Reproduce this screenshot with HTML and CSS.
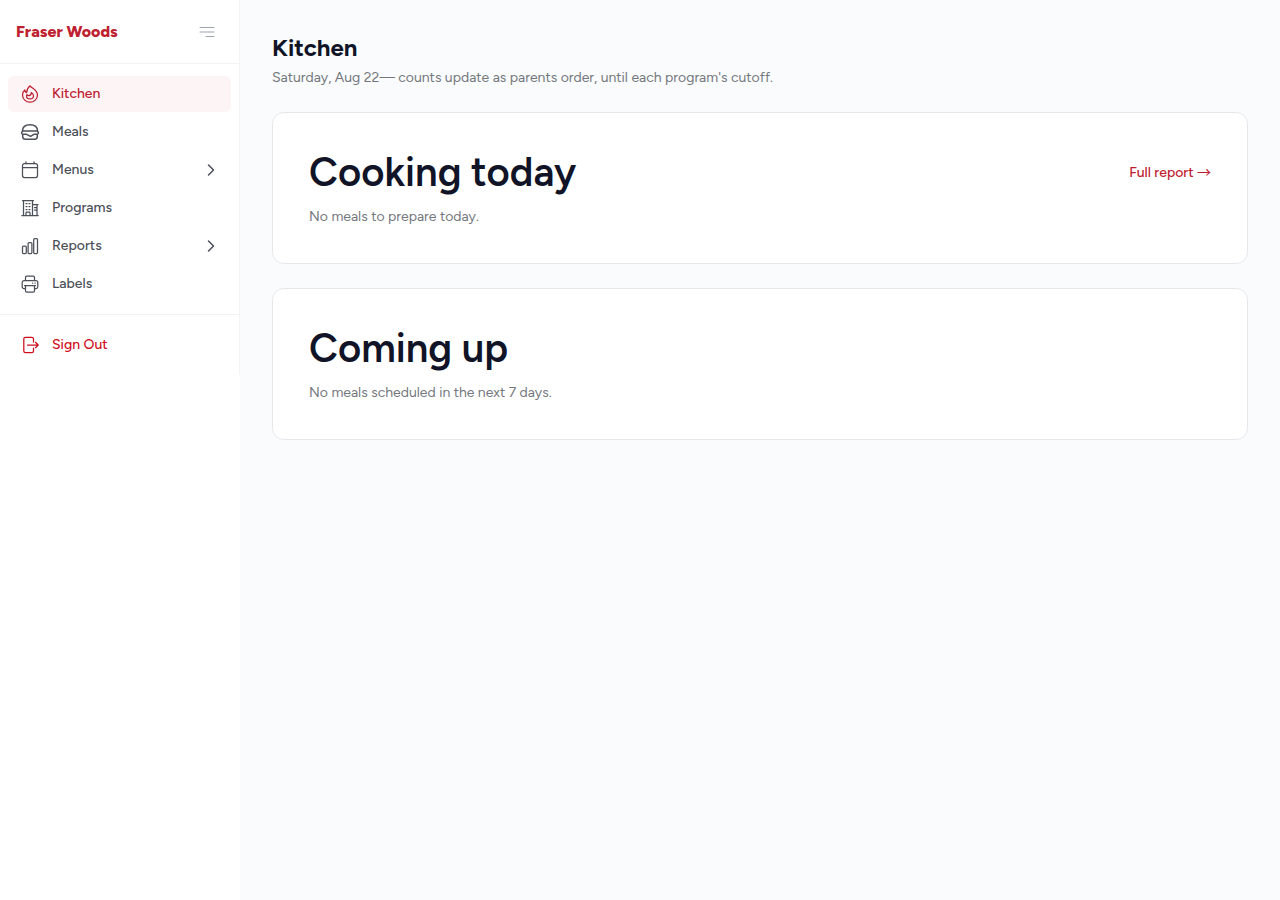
FILE: index.html
```html
<!DOCTYPE html>
<html lang="en">
<head>
    <meta charset="UTF-8">
    <meta name="viewport" content="width=device-width, initial-scale=1.0">
    <title>Kitchen - Fraser Woods</title>
    <link rel="stylesheet" href="styles.css">
</head>
<body>
    <aside class="sidebar">
        <div class="sidebar-inner">
            <div class="brand">
                <a class="brand-name" href="#">Fraser Woods</a>
                <button class="menu-toggle" type="button" aria-label="Toggle sidebar">
                    <svg viewBox="0 0 16 16"><path d="M1 3.500h14M1 8h14M7 12.500h8"/></svg>
                </button>
            </div>

            <nav class="nav">
                <a class="nav-item active" href="#">
                    <svg class="icon" viewBox="0 0 20 20"><path d="M10 1.800c.8 2.200 7.500 3.700 7.500 9.200a7.400 7.400 0 0 1-7.500 7.200A7.400 7.400 0 0 1 2.500 11c0-2 .7-3.700 2.300-5 .3 1.300.8 2.200 1.800 2.800C6.900 6 7.800 3.600 10 1.800z"/><path d="M11.300 8.500c1.500 1 2.200 2 2.200 3.200 0 1.900-1.500 3.200-3.500 3.200s-3.500-1.200-3.500-2.900c0-.6.200-1 .6-1.400.5.700 1 1 1.800 1 1.300 0 2.400-1.200 2.400-3.100z"/></svg>
                    <span>Kitchen</span>
                </a>
                <a class="nav-item" href="#">
                    <svg class="icon burger" viewBox="0 0 20 20"><path d="M2.500 9C2.500 5 5.500 2.700 10 2.700S17.500 5 17.500 9z"/><path d="M2.500 9.500c-1.300.6-1.200 2.600.3 2.800h3.700l4 2 3.500-2h3.200c1.500-.2 1.600-2.200.3-2.800M2.700 12.500v2c0 1.700 1 2.700 2.500 2.700h9.600c1.500 0 2.500-1 2.500-2.700v-2"/></svg>
                    <span>Meals</span>
                </a>
                <a class="nav-item" href="#">
                    <svg class="icon" viewBox="0 0 20 20"><rect x="2.500" y="3.500" width="15" height="14" rx="2"/><path d="M2.500 7.500h15M6 1.800v1.700M14 1.800v1.700"/></svg>
                    <span>Menus</span>
                    <svg class="chevron" viewBox="0 0 16 16"><path d="M5.500 3L10.500 8l-5 5"/></svg>
                </a>
                <a class="nav-item" href="#">
                    <svg class="icon" viewBox="0 0 20 20"><path d="M1.800 17.500h16.500M3.500 17.500v-15M12.500 2.500v15M2.500 2.500h11M12.500 6.500h5.500M17 6.500v11M14.500 9.500H17M14.500 12H17M6 17.500v-2.500c0-.5.300-.8.8-.8h2.400c.5 0 .8.300.8.800v2.500"/><path d="M6 5.500h1M9 5.500h1M6 8.500h1M9 8.500h1M6 11.500h1M9 11.500h1"/></svg>
                    <span>Programs</span>
                </a>
                <a class="nav-item" href="#">
                    <svg class="icon" viewBox="0 0 20 20"><rect x="2.500" y="10" width="3.800" height="7.500" rx="1"/><rect x="8.100" y="6.500" width="3.800" height="11" rx="1"/><rect x="13.700" y="2.500" width="3.800" height="15" rx="1"/></svg>
                    <span>Reports</span>
                    <svg class="chevron" viewBox="0 0 16 16"><path d="M5.500 3L10.500 8l-5 5"/></svg>
                </a>
                <a class="nav-item" href="#">
                    <svg class="icon" viewBox="0 0 20 20"><path d="M5.500 6.500v-3c0-.8.5-1.300 1.300-1.300h6.400c.8 0 1.300.5 1.300 1.300v3M5 14.500H4c-1 0-1.800-.8-1.800-1.800V8.500c0-1.100.8-2 1.900-2h11.800c1.100 0 1.900.9 1.900 2v4.200c0 1-.8 1.800-1.800 1.800h-1M4.500 11.500h11M5.500 11.500v5.200c0 .8.5 1.300 1.300 1.300h6.400c.8 0 1.300-.5 1.300-1.300v-5.200M12.500 9h.3M15 9h.3"/></svg>
                    <span>Labels</span>
                </a>
            </nav>

            <div class="account">
                <button class="nav-item sign-out" type="button">
                    <svg class="icon" viewBox="0 0 20 20"><path d="M13.500 7V4c0-1-.7-1.700-1.700-1.700H5.500c-1 0-1.700.7-1.700 1.700v12c0 1 .7 1.700 1.700 1.700h6.300c1 0 1.700-.7 1.700-1.700v-3M7.500 10h10.700M15.500 7.300l2.700 2.700-2.700 2.700"/></svg>
                    <span>Sign Out</span>
                </button>
            </div>
        </div>
    </aside>

    <main class="content">
        <header class="page-header">
            <h1>Kitchen</h1>
            <p>Saturday, Aug 22— counts update as parents order, until each program's cutoff.</p>
        </header>

        <section class="card">
            <div class="card-header">
                <h2>Cooking today</h2>
                <a class="report-link" href="#">Full report <span class="arrow">→</span></a>
            </div>
            <p>No meals to prepare today.</p>
        </section>

        <section class="card">
            <div class="card-header">
                <h2>Coming up</h2>
            </div>
            <p>No meals scheduled in the next 7 days.</p>
        </section>
    </main>
</body>
</html>
```
FILE: styles.css
```css
* {
    box-sizing: border-box;
}
body {
    display: flex;
    min-height: 100vh;
    margin: 0;
    font-family: Figtree, Lato, "Open Sans", sans-serif;
    font-size: 14px;
    line-height: 20px;
    color: #101426;
    background-color: #f9fbfc;
}
h1, h2, p {
    margin: 0;
}
a {
    text-decoration: none;
}
svg {
    fill: none;
    stroke: currentColor;
    stroke-linecap: round;
    stroke-linejoin: round;
}

/* Sidebar */
.sidebar {
    flex: 0 0 240px;
    background-color: #fff;
}
.sidebar-inner {
    border-right: 1px solid #f3f4f6;
}
.brand {
    display: flex;
    align-items: center;
    justify-content: space-between;
    height: 64px;
    padding: 0 24px 0 16px;
    border-bottom: 1px solid #f1f2f4;
}
.brand-name {
    font-size: 16px;
    font-weight: 800;
    color: #be202f;
}
.menu-toggle {
    padding: 0;
    border: 0;
    background: none;
    color: #9ca3af;
    cursor: pointer;
}
.menu-toggle svg {
    display: block;
    width: 16px;
    height: 16px;
}
.nav {
    display: flex;
    flex-direction: column;
    gap: 2px;
    padding: 12px 8px;
}
.nav-item {
    display: flex;
    align-items: center;
    gap: 12px;
    width: 100%;
    height: 36px;
    padding: 0 12px;
    border: 0;
    border-radius: 6px;
    background: none;
    font: inherit;
    font-weight: 500;
    color: #4b4f58;
    cursor: pointer;
}
.nav-item.active {
    background-color: #fdf4f5;
    color: #be202f;
}
.icon {
    width: 20px;
    height: 20px;
    stroke-width: 1.25;
}
.icon.burger {
    stroke-width: 1.5;
}
.chevron {
    width: 16px;
    height: 16px;
    margin-left: auto;
    stroke-width: 1.5;
}
.account {
    padding: 12px 8px;
    border-top: 1px solid #f1f2f4;
}
.sign-out {
    color: #cf0f1c;
}

/* Page */
.content {
    display: flex;
    flex: 1;
    flex-direction: column;
    gap: 24px;
    min-width: 0;
    padding: 32px;
}
.page-header h1 {
    margin-bottom: 4px;
    font-size: 24px;
    font-weight: 700;
    line-height: 32px;
}
.page-header p,
.card p {
    color: #74777d;
}
.card {
    padding: 36px;
    border: 1px solid #e5e7eb;
    border-radius: 12px;
    background-color: #fff;
}
.card-header {
    display: flex;
    align-items: center;
    justify-content: space-between;
    margin-bottom: 12px;
}
.card h2 {
    font-size: 40px;
    font-weight: 600;
    line-height: 46px;
}
.report-link {
    font-weight: 500;
    color: #be202f;
}
.arrow {
    font-family: "Noto Sans CJK SC", sans-serif;
    font-weight: 400;
}
```
